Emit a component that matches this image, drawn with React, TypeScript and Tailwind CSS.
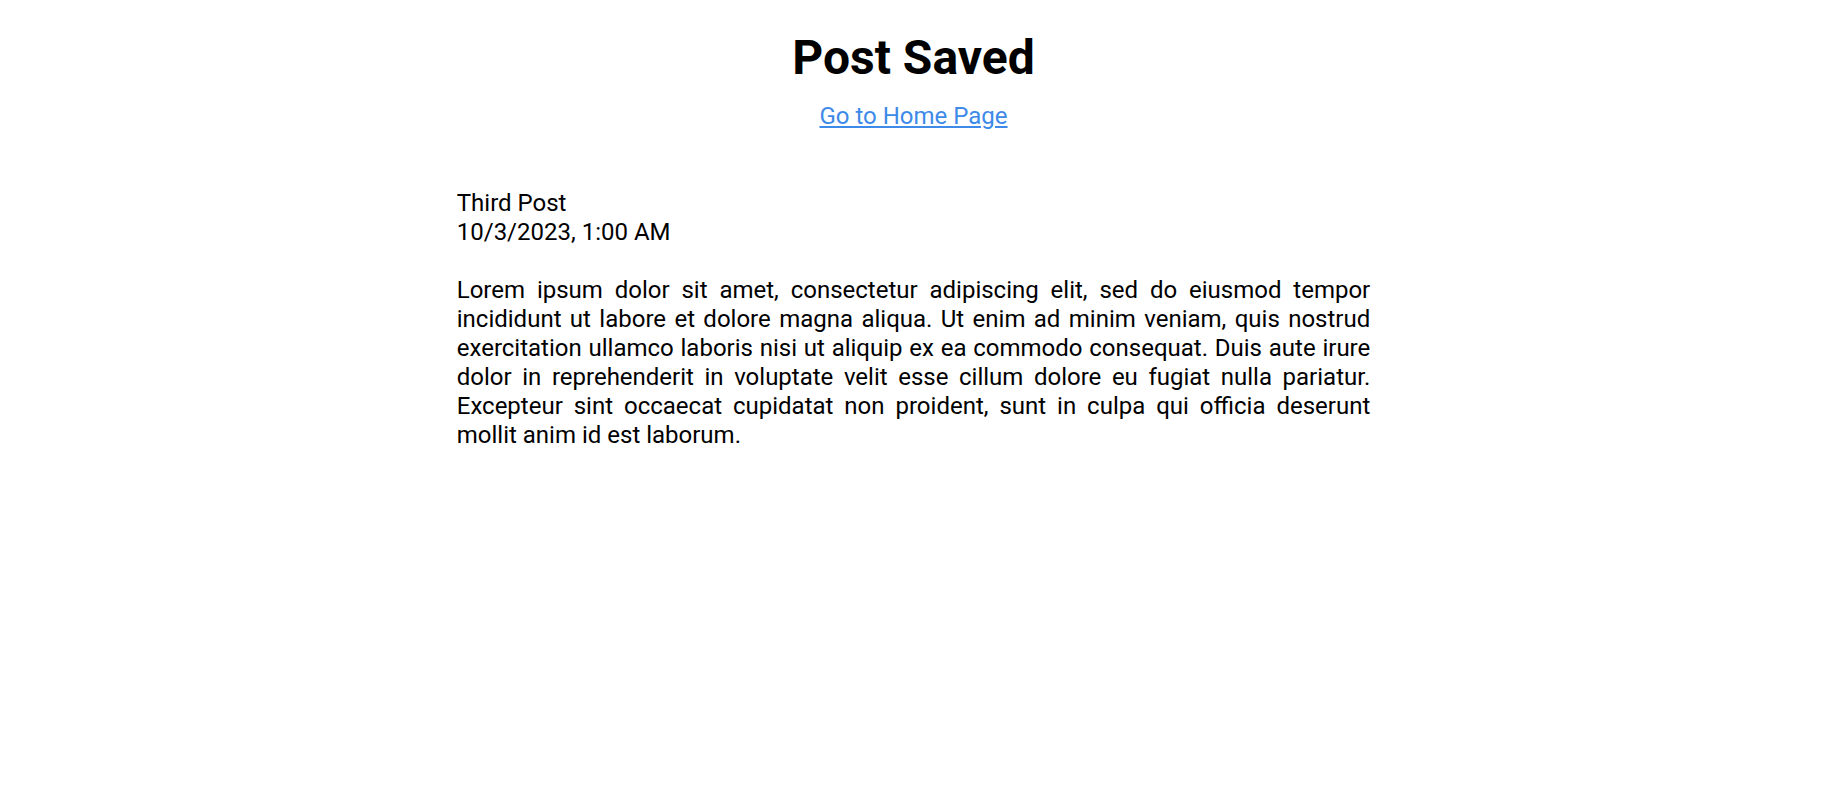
export default function App() {
  const body =
    'Lorem ipsum dolor sit amet, consectetur adipiscing elit, sed do eiusmod tempor incididunt ut labore et dolore magna aliqua. Ut enim ad minim veniam, quis nostrud exercitation ullamco laboris nisi ut aliquip ex ea commodo consequat. Duis aute irure dolor in reprehenderit in voluptate velit esse cillum dolore eu fugiat nulla pariatur. Excepteur sint occaecat cupidatat non proident, sunt in culpa qui officia deserunt mollit anim id est laborum.';

  return (
    <div className="min-h-screen bg-white text-black font-['Roboto',sans-serif]">
      {/* Header */}
      <div className="flex flex-col items-center pt-[30px]">
        <h1 className="text-[48px] leading-[56px] font-bold">Post Saved</h1>
        <a href="#" className="mt-[16px] text-[24px] leading-[29px] text-[#3d8ae8] underline">
          Go to Home Page
        </a>
      </div>

      {/* Post */}
      <div className="w-1/2 mx-auto mt-[58px] text-[24px] leading-[29px]">
        <div>Third Post</div>
        <div>10/3/2023, 1:00 AM</div>
        <p className="mt-[29px] text-justify">{body}</p>
      </div>
    </div>
  );
}
